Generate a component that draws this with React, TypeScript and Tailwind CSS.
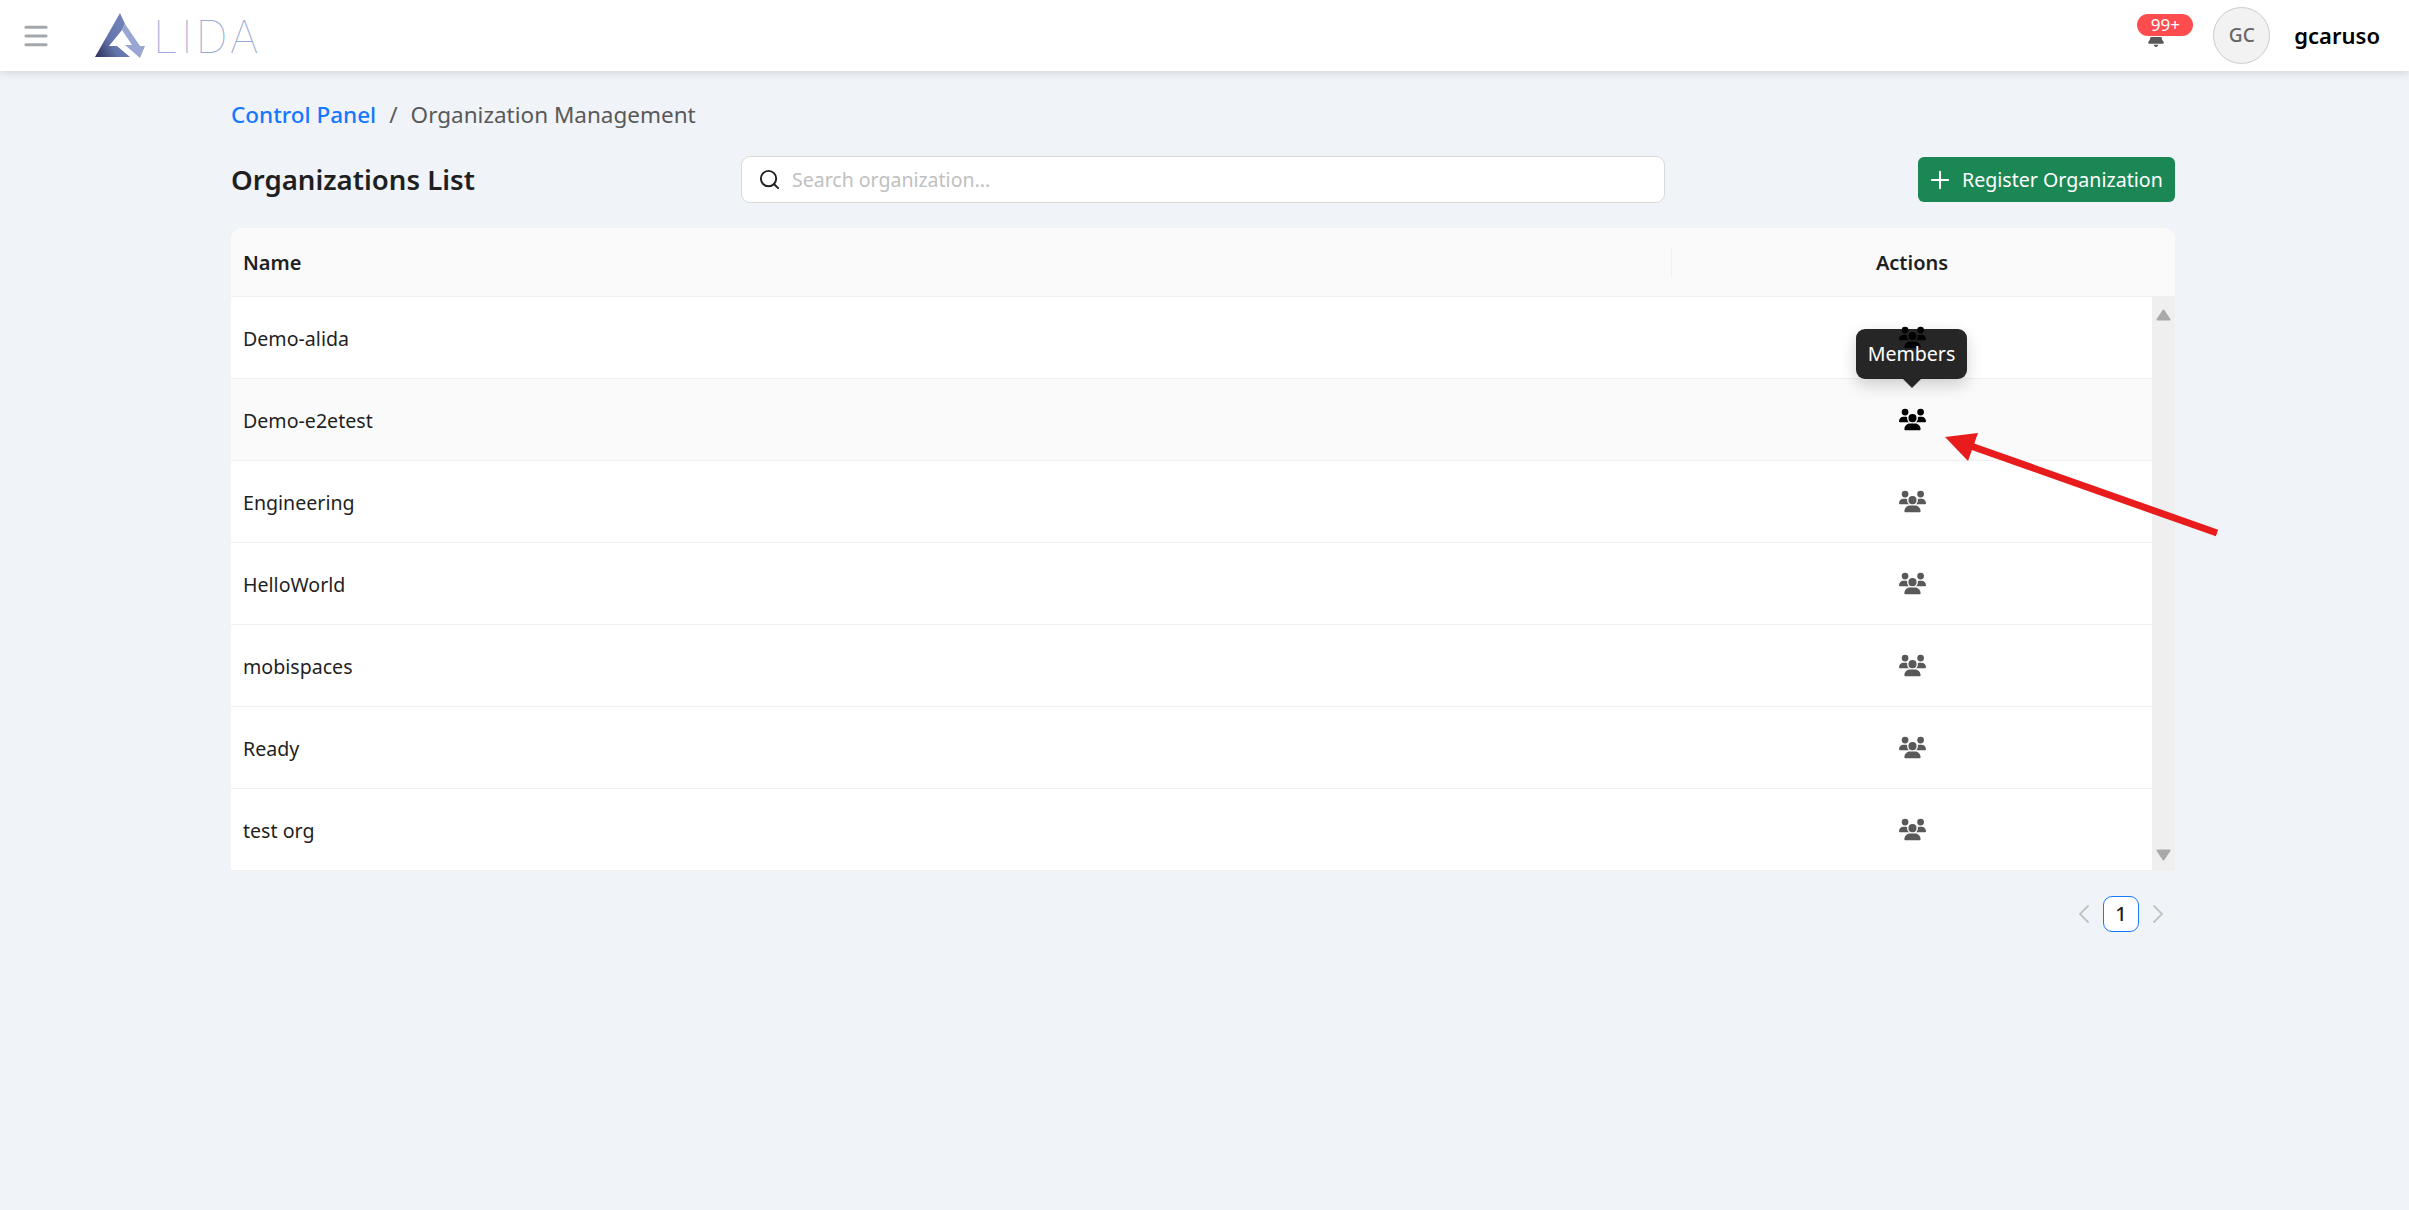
import { FaBell, FaUsers } from 'react-icons/fa6'
import { Menu, Plus, Search, ChevronLeft, ChevronRight } from 'lucide-react'

const orgs = ['Demo-alida', 'Demo-e2etest', 'Engineering', 'HelloWorld', 'mobispaces', 'Ready', 'test org']

function Logo() {
  return (
    <div className="flex items-end h-[47px] w-[165px] ml-[44px]">
      <svg width="52" height="47" viewBox="0 0 52 47" className="shrink-0">
        <defs>
          <linearGradient id="logoGrad" x1="0" y1="1" x2="0.8" y2="0.4">
            <stop offset="0" stopColor="#2c2c58" />
            <stop offset="0.55" stopColor="#6274aa" />
            <stop offset="1" stopColor="#6f80b8" />
          </linearGradient>
        </defs>
        <path d="M25 1 L0 45 L35 45 L22 34 L14 34 L27 18 L30 12 Z" fill="url(#logoGrad)" />
        <path d="M30 12 L45 34 L50 34 L45 46 L30 33 L37 33 L27 18 Z" fill="#99a6d2" />
      </svg>
      <span className="ml-[6px] text-[45px] leading-[45px] font-thin tracking-[3px] text-[#9aa8d6] font-['Inter',sans-serif]">
        LIDA
      </span>
    </div>
  )
}

function ScrollArrow({ down }: { down?: boolean }) {
  return (
    <svg width="15" height="12" viewBox="0 0 15 12">
      <path d={down ? 'M1.5 1.5 H13.5 L7.5 10.5 Z' : 'M1.5 10.5 H13.5 L7.5 1.5 Z'} fill="#a9a9a9" stroke="#a9a9a9" strokeWidth="2" strokeLinejoin="round" />
    </svg>
  )
}

export default function App() {
  return (
    <div className="relative min-h-[1210px] bg-[#f0f3f8] font-['Noto_Sans','Open_Sans',sans-serif] overflow-hidden">
      {/* top bar */}
      <header className="flex items-center h-[71px] bg-white shadow-[0_2px_8px_rgba(0,0,0,0.12)]">
        <Menu size={30} strokeWidth={2.5} className="ml-[21px] text-[#a3a8ad]" />
        <Logo />
        <div className="ml-auto flex items-center">
          <div className="relative w-[56px] h-[56px]">
            <FaBell size={18} className="absolute left-[10px] top-[21px] text-[#595959]" />
            <span className="absolute left-0 top-[6px] h-[22px] w-[56px] rounded-full bg-[#ff4d4f] shadow-[0_0_0_1px_#fff] text-center text-[17px] leading-[22px] text-white">
              99+
            </span>
          </div>
          <div className="ml-[20px] flex items-center justify-center w-[57px] h-[57px] rounded-full bg-[#f2f2f2] border border-[#ccc] text-[19px] font-medium text-[#666]">
            GC
          </div>
          <span className="ml-[24px] mr-[29px] text-[22px] font-semibold text-black">gcaruso</span>
        </div>
      </header>

      <main className="ml-[231px] w-[1944px]">
        {/* breadcrumb */}
        <div className="flex items-center h-[30px] mt-[29px] text-[22.5px]">
          <span className="font-medium text-[#1677ff]">Control Panel</span>
          <span className="mx-[13px] text-[#595959]">/</span>
          <span className="text-[#595959]">Organization Management</span>
        </div>

        {/* title + search + button */}
        <div className="relative flex items-center justify-between h-[47px] mt-[26px]">
          <h1 className="text-[27.6px] font-semibold text-[#1f1f1f]">Organizations List</h1>
          <div className="absolute left-[510px] flex items-center w-[924px] h-[47px] pl-[16px] bg-white rounded-[9px] border border-[#d9d9d9]">
            <Search size={23} strokeWidth={2} className="text-[#1f1f1f]" />
            <span className="ml-[11px] pt-[1px] text-[19.5px] text-[#c0c0c0]">Search organization...</span>
          </div>
          <button className="flex items-center h-[45px] w-[257px] pl-[8px] rounded-[6px] bg-[#1b8755] text-white text-[19.6px] whitespace-nowrap">
            <Plus size={28} strokeWidth={1.75} />
            <span className="ml-[8px]">Register Organization</span>
          </button>
        </div>

        {/* table */}
        <div className="mt-[25px] rounded-t-[12px] overflow-hidden bg-white">
          <div className="flex h-[69px] items-center bg-[#fafafa] border-b border-[#f0f0f0] text-[20px] font-semibold text-[#1f1f1f]">
            <div className="relative flex items-center h-full w-[1441px] pl-[12px] pt-[2px]">
              Name
              <span className="absolute right-0 top-[20px] h-[29px] w-px bg-[#f0f0f0]" />
            </div>
            <div className="w-[480px] pt-[2px] text-center">Actions</div>
          </div>
          <div className="flex">
            <div className="flex-1">
              {orgs.map((name, i) => (
                <div
                  key={name}
                  className={`flex items-center h-[82px] border-b border-[#f0f0f0] text-[19.6px] text-[#1f1f1f] ${i === 1 ? 'bg-[#fafafa]' : 'bg-white'}`}
                >
                  <div className="w-[1441px] pl-[12px] pt-[2px]">{name}</div>
                  <div className="relative flex justify-center w-[480px]">
                    <FaUsers size={27} className={i < 2 ? 'text-black' : 'text-[#595959]'} />
                    {i === 0 && (
                      <div className="absolute left-[184px] top-[5px] z-10 flex items-center justify-center w-[111px] h-[50px] rounded-[9px] bg-black/85 text-white text-[19.6px] shadow-[0_6px_16px_rgba(0,0,0,0.18)]">
                        Members
                        <span className="absolute left-1/2 bottom-[-9px] -ml-[9px] w-0 h-0 border-x-[9px] border-x-transparent border-t-[9px] border-t-[#262626]" />
                      </div>
                    )}
                  </div>
                </div>
              ))}
            </div>
            <div className="flex flex-col items-center justify-between w-[23px] pt-[12px] pb-[10px] bg-[#efefef]">
              <ScrollArrow />
              <ScrollArrow down />
            </div>
          </div>
        </div>

        {/* pagination */}
        <div className="flex items-center justify-end h-[36px] mt-[25px] pr-[1px]">
          <ChevronLeft size={32} strokeWidth={1.5} className="text-[#c4c4c4]" />
          <div className="mx-[3px] flex items-center justify-center w-[36px] h-[36px] rounded-[9px] border border-[#1677ff] bg-white text-[20px] font-medium text-[#1f1f1f]">
            1
          </div>
          <ChevronRight size={32} strokeWidth={1.5} className="text-[#c4c4c4]" />
        </div>
      </main>

      {/* red annotation arrow */}
      <svg className="absolute left-[1930px] top-[420px] z-20" width="300" height="125" viewBox="1930 420 300 125">
        <path d="M2217 533 L1968 445" stroke="#e81c1c" strokeWidth="7" fill="none" />
        <path d="M1945 437 L1978 433 L1968 461 Z" fill="#e81c1c" />
      </svg>
    </div>
  )
}
